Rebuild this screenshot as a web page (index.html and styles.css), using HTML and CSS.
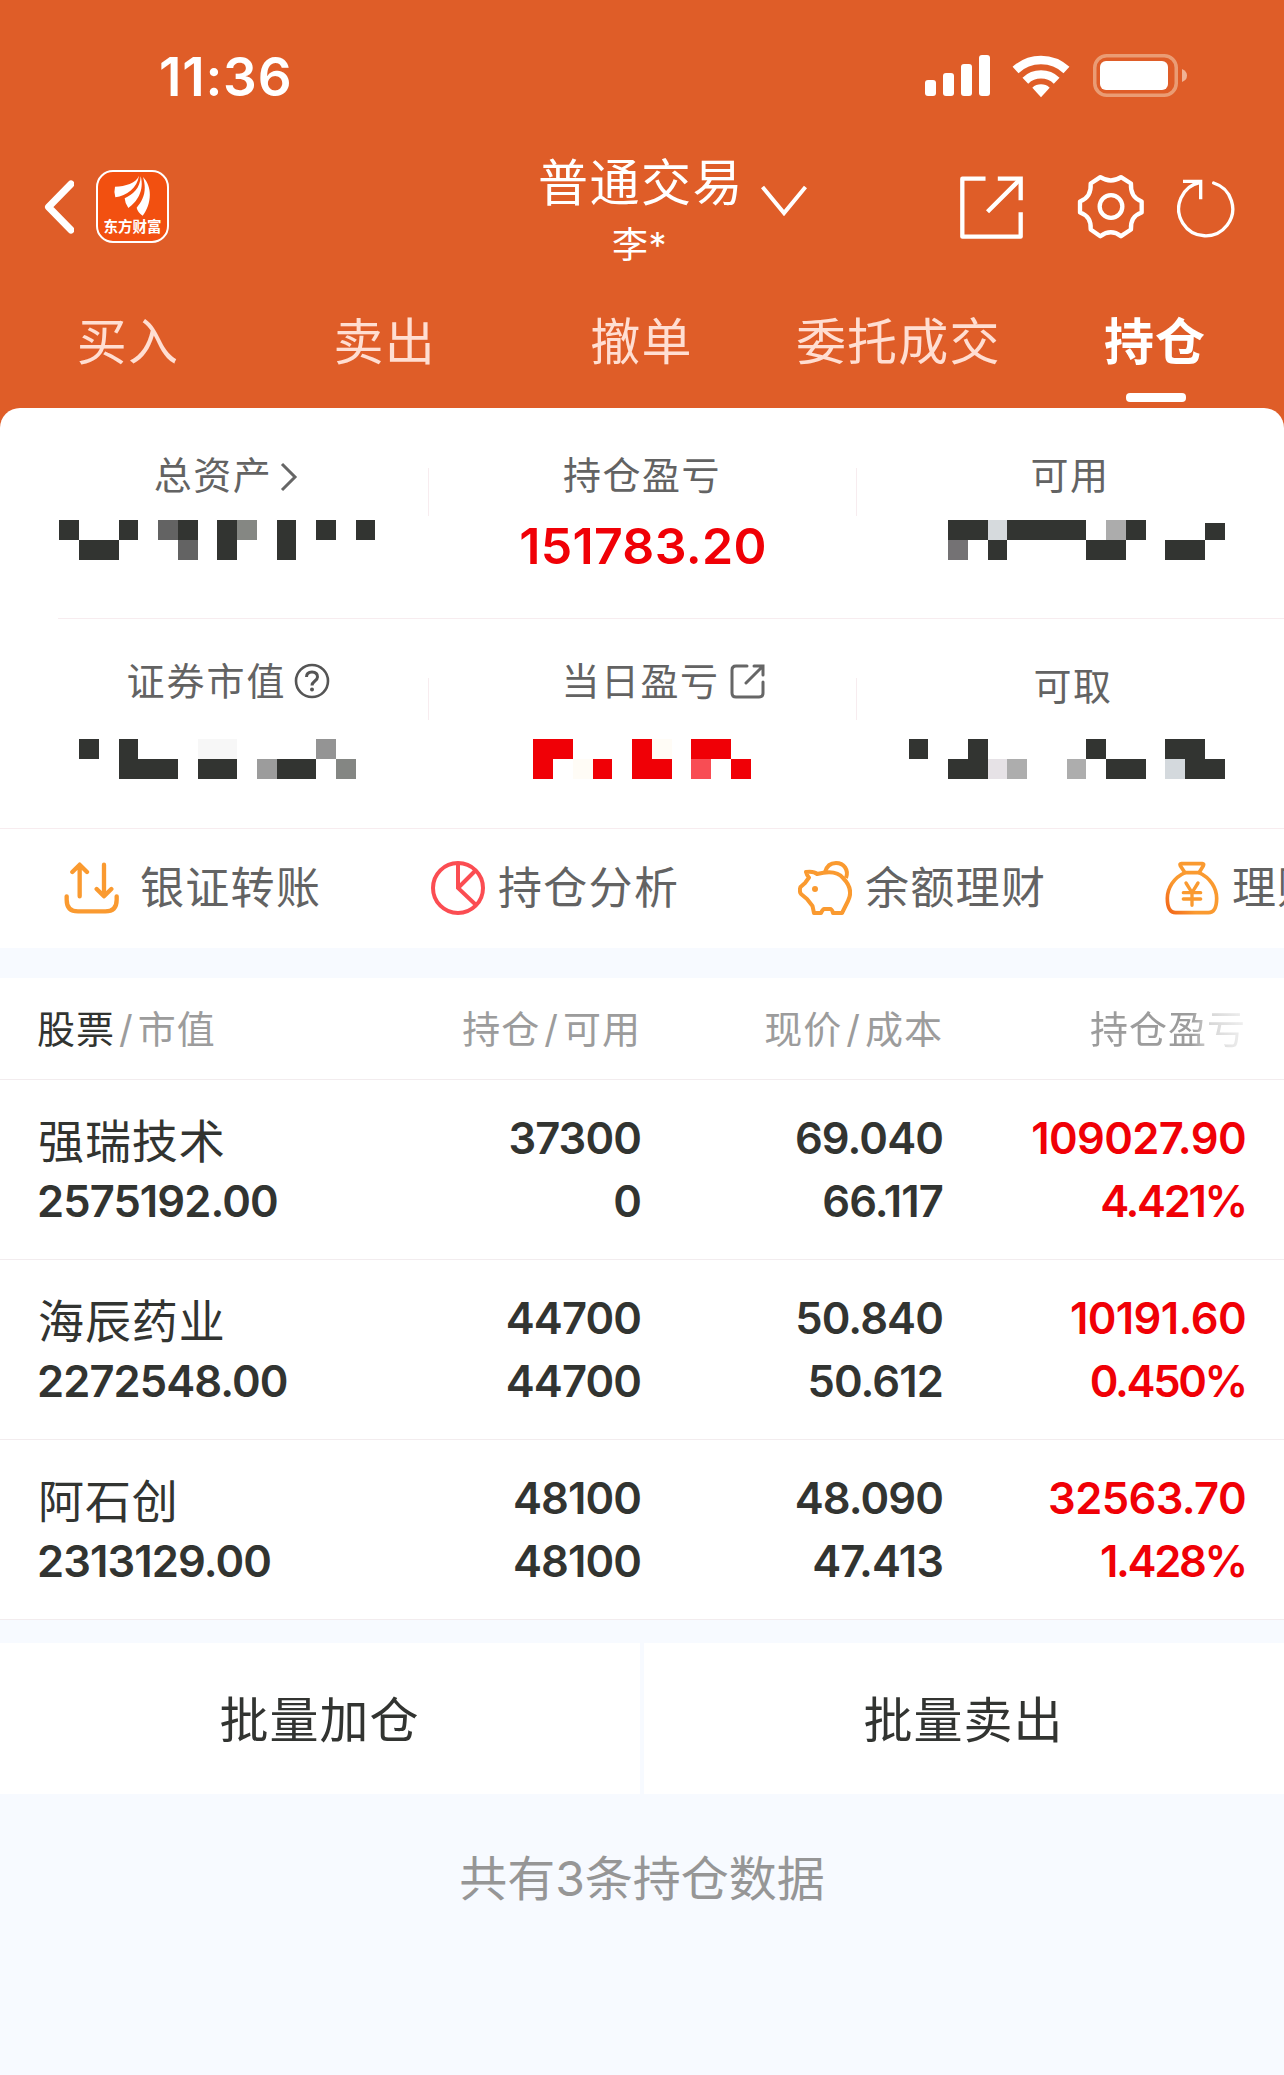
FILE: index.html
```html
<!DOCTYPE html>
<html lang="zh-CN">
<head>
    <meta charset="UTF-8">
    <meta name="viewport" content="width=device-width, initial-scale=1.0">
    <title>普通交易 - 持仓</title>
    <link rel="stylesheet" href="styles.css">
</head>
<body>
    <header class="header">
        <div class="status-bar">
            <span class="time">11:36</span>
            <div class="status-icons">
                <svg class="signal" width="65" height="41" viewBox="0 0 65 41" fill="#fff">
                    <rect x="0" y="25" width="11" height="16" rx="3"/>
                    <rect x="18" y="18" width="11" height="23" rx="3"/>
                    <rect x="36" y="9" width="11" height="32" rx="3"/>
                    <rect x="54" y="0" width="11" height="41" rx="3"/>
                </svg>
                <svg class="wifi" width="60" height="44" viewBox="0 0 180 132" fill="none" stroke="#fff">
                    <path d="M13.6 48A112 112 0 0 1 166.4 48" stroke-width="26"/>
                    <path d="M43 80A68.5 68.5 0 0 1 137 80" stroke-width="25"/>
                    <path d="M90 130L64 101A39 39 0 0 1 116 101Z" fill="#fff" stroke="none"/>
                </svg>
                <svg class="battery" width="95" height="43" viewBox="0 0 95 43">
                    <rect x="1.75" y="1.75" width="81.5" height="39.5" rx="12" fill="none" stroke="#ea9c74" stroke-width="3.5"/>
                    <rect x="7" y="7" width="68" height="29" rx="6" fill="#fff"/>
                    <path d="M89 15Q94 17 94 21.500T89 28Z" fill="#f0b294"/>
                </svg>
            </div>
        </div>

        <div class="nav">
            <div class="nav-left">
                <svg width="30" height="54" viewBox="0 0 30 54" fill="none" stroke="#fff" stroke-width="7" stroke-linecap="round" stroke-linejoin="round">
                    <path d="M27 4L4.500 27L27 50"/>
                </svg>
                <div class="logo">
                    <svg width="40" height="42" viewBox="44 14 120 126" fill="#fff">
                        <path d="M122 16C112 40 82 47 50 49Q46 65 51 81C85 76 117 52 122 16Z"/>
                        <path d="M127 18C126 55 102 73 79 84Q80 100 90 113C116 96 139 60 127 18Z"/>
                        <path d="M134 20C147 63 134 90 115 112Q118 126 133 136C154 110 168 55 134 20Z"/>
                    </svg>
                    <span>东方财富</span>
                </div>
            </div>
            <div class="nav-title">
                <h1>普通交易</h1>
                <p>李*</p>
            </div>
            <svg class="nav-arrow" width="46" height="32" viewBox="0 0 46 32" fill="none" stroke="#fff" stroke-width="4">
                <path d="M1.500 2L23 28L44.500 2"/>
            </svg>
            <div class="nav-icons">
                <svg width="63" height="63" viewBox="0 0 190 190" fill="none" stroke="#fff" stroke-width="13" stroke-linejoin="round">
                    <path d="M77 8H7V183H183V109M83 108L181 10"/>
                    <path d="M114 8H183V73" stroke-linejoin="miter"/>
                </svg>
                <svg class="gear" width="70" height="67" viewBox="0 0 210 200" fill="none" stroke="#fff" stroke-width="13" stroke-linejoin="round">
                    <path d="M44 31L73 12Q105 32 135 12L165 31Q162 72 197 85V118Q162 130 165 169L135 189Q105 166 73 189L44 169Q47 130 12 118V85Q47 72 44 31Z"/>
                    <circle cx="105" cy="100" r="34"/>
                </svg>
                <svg class="refresh" width="60" height="60" viewBox="0 0 180 180" fill="none" stroke="#fff" stroke-width="10">
                    <path d="M110 15A81 81 0 1 1 70 13" stroke-linecap="round"/>
                    <path d="M18 10H71V64"/>
                </svg>
            </div>
        </div>

        <nav class="tabs">
            <a class="tab">买入</a>
            <a class="tab">卖出</a>
            <a class="tab">撤单</a>
            <a class="tab">委托成交</a>
            <a class="tab active">持仓</a>
        </nav>
    </header>

    <div class="card-wrap">
        <section class="card">
            <div class="stats">
                <div class="stat">
                    <div class="label label-assets">总资产
                        <svg width="18" height="30" viewBox="0 0 18 30" fill="none" stroke="#666" stroke-width="3"><path d="M2 2L15 15L2 28"/></svg>
                    </div>
                    <svg class="mosaic" width="428" height="40" viewBox="0 0 428 40" fill="#323431" shape-rendering="crispEdges">
                        <path d="M59 0H79V20H59ZM119 0H138V20H119ZM79 20H119V40H79ZM178 0H198V20H178ZM217 0H237V40H217ZM277 0H296V40H277ZM316 0H336V20H316ZM356 0H375V20H356Z"/>
                        <path fill="#636363" d="M158 0H178V20H158ZM178 20H198V40H178Z"/>
                        <path fill="#858783" d="M237 0H257V20H237Z"/>
                    </svg>
                </div>
                <div class="stat">
                    <div class="label">持仓盈亏</div>
                    <div class="total">151783.20</div>
                </div>
                <div class="stat">
                    <div class="label">可用</div>
                    <svg class="mosaic" width="428" height="40" viewBox="0 0 428 40" fill="#323431" shape-rendering="crispEdges">
                        <path d="M92 0H132V20H92ZM151 0H230V20H151ZM270 0H290V20H270ZM349 3H369V20H349ZM132 20H151V40H132ZM230 20H270V40H230ZM309 20H349V40H309Z"/>
                        <path fill="#d6dadd" d="M132 0H151V20H132Z"/>
                        <path fill="#acacac" d="M250 0H270V20H250Z"/>
                        <path fill="#747274" d="M92 20H112V40H92Z"/>
                    </svg>
                </div>
            </div>
            <div class="stats stats-second">
                <div class="stat">
                    <div class="label label-market">证券市值
                        <svg width="36" height="36" viewBox="0 0 36 36" fill="none" stroke="#555" stroke-width="2.600">
                            <circle cx="18" cy="18" r="16"/>
                            <path d="M12.500 14Q12.500 9 18 9T23.500 14C23.500 18 18 18 18 22.500" stroke-width="3"/>
                            <circle cx="18" cy="26.500" r="2" fill="#555" stroke="none"/>
                        </svg>
                    </div>
                    <svg class="mosaic" width="428" height="40" viewBox="0 0 428 40" fill="#323431" shape-rendering="crispEdges">
                        <path d="M79 0H99V20H79ZM119 0H138V20H178V40H119ZM198 20H237V40H198ZM277 20H316V40H277Z"/>
                        <path fill="#f7f7f7" d="M198 0H237V20H198Z"/>
                        <path fill="#9c9c9c" d="M257 20H277V40H257Z"/>
                        <path fill="#949494" d="M316 0H336V20H316Z"/>
                        <path fill="#848683" d="M336 20H356V40H336Z"/>
                    </svg>
                </div>
                <div class="stat">
                    <div class="label label-today">当日盈亏
                        <svg width="35" height="35" viewBox="0 0 35 35" fill="none" stroke="#666" stroke-width="3" stroke-linecap="round">
                            <path d="M17 2H6Q2 2 2 6V29Q2 33 6 33H29Q33 33 33 29V18M24 2H33V11M16 19L32 3"/>
                        </svg>
                    </div>
                    <svg class="mosaic" width="428" height="40" viewBox="0 0 428 40" fill="#f00006" shape-rendering="crispEdges">
                        <path d="M105 0H145V20H125V40H105ZM165 20H184V40H165ZM204 0H224V20H244V40H204ZM263 0H303V20H263ZM303 20H323V40H303Z"/>
                        <path fill="#fffcf6" d="M145 20H165V40H145ZM224 0H244V20H224Z"/>
                        <path fill="#f84d54" d="M263 20H283V40H263Z"/>
                    </svg>
                </div>
                <div class="stat">
                    <div class="label label-draw">可取</div>
                    <svg class="mosaic" width="428" height="40" viewBox="0 0 428 40" fill="#323431" shape-rendering="crispEdges">
                        <path d="M53 0H72V20H53ZM112 0H132V40H92V20H112ZM230 0H250V20H230ZM250 20H290V40H250ZM309 0H349V20H369V40H329V20H309Z"/>
                        <path fill="#e6e2e6" d="M132 20H151V40H132Z"/>
                        <path fill="#adadad" d="M151 20H171V40H151ZM211 20H230V40H211Z"/>
                        <path fill="#d4d9dd" d="M309 20H329V40H309Z"/>
                    </svg>
                </div>
            </div>

            <div class="tools">
                <a class="tool tool-transfer">
                    <svg width="55" height="52" viewBox="0 0 165 156" fill="none" stroke="#fa9a30" stroke-width="13" stroke-linecap="round" stroke-linejoin="round">
                        <path d="M8 103V113Q8 148 42 148H124Q158 148 158 113V103"/>
                        <path d="M47 103V9M25 30L47 8L69 30M120 8V102M98 81L120 103L142 81"/>
                    </svg>
                    银证转账
                </a>
                <a class="tool">
                    <svg width="54" height="54" viewBox="0 0 54 54" fill="none" stroke="#fb4d52" stroke-width="4">
                        <circle cx="27" cy="27" r="25"/>
                        <path d="M27 2V27L45 44M27 27L44 10"/>
                    </svg>
                    持仓分析
                </a>
                <a class="tool">
                    <svg width="54" height="54" viewBox="0 0 54 54" fill="none" stroke="#fa9a30" stroke-width="4" stroke-linejoin="round">
                        <path d="M8 11Q16 10 19 13Q38 8 45 17Q56 28 50 40L44 52H35Q34 48 32 48H26Q25 48 23 52H16L14.500 45L9 38L3 33Q1 30 2.500 26L7 22L11 16.500Q9 15 8 11Z"/>
                        <path d="M27 11C29 4 34 2 38 2C46 2 51 9 48 17"/>
                        <circle cx="17" cy="28" r="3" fill="#fa9a30" stroke="none"/>
                    </svg>
                    余额理财
                </a>
                <a class="tool">
                    <svg width="54" height="54" viewBox="3 3 162 162" fill="none" stroke="url(#bag)" stroke-width="11" stroke-linecap="round" stroke-linejoin="round">
                        <defs>
                            <linearGradient id="bag" gradientUnits="userSpaceOnUse" x1="5" y1="150" x2="60" y2="110">
                                <stop offset="0" stop-color="#f26418"/>
                                <stop offset="1" stop-color="#fa9a30"/>
                            </linearGradient>
                        </defs>
                        <path d="M63 38L49 17Q46 11 52 11H115Q121 11 118 17L105 38Z"/>
                        <path d="M63 38C28 54 10 85 10 115C10 145 18 158 35 158H133C150 158 158 145 158 115C158 85 140 54 105 38"/>
                        <path d="M66 69L84 98L102 69M84 98V136M58 98H110M58 117H110" stroke="#fa9a30" stroke-width="10"/>
                    </svg>
                    理财
                </a>
            </div>
        </section>
    </div>

    <section class="holdings">
        <div class="row table-head">
            <div><b>股票</b><i>/</i>市值</div>
            <div>持仓<i>/</i>可用</div>
            <div>现价<i>/</i>成本</div>
            <div class="fade">持仓盈亏</div>
        </div>
        <div class="row">
            <div><p class="name">强瑞技术</p><p>2575192.00</p></div>
            <div><p>37300</p><p>0</p></div>
            <div><p>69.040</p><p>66.117</p></div>
            <div class="up"><p>109027.90</p><p class="rate">4.421%</p></div>
        </div>
        <div class="row">
            <div><p class="name">海辰药业</p><p>2272548.00</p></div>
            <div><p>44700</p><p>44700</p></div>
            <div><p>50.840</p><p>50.612</p></div>
            <div class="up"><p>10191.60</p><p class="rate">0.450%</p></div>
        </div>
        <div class="row">
            <div><p class="name">阿石创</p><p>2313129.00</p></div>
            <div><p>48100</p><p>48100</p></div>
            <div><p>48.090</p><p>47.413</p></div>
            <div class="up"><p>32563.70</p><p class="rate">1.428%</p></div>
        </div>
    </section>

    <div class="actions">
        <button type="button">批量加仓</button>
        <button type="button">批量卖出</button>
    </div>
    <p class="summary">共有3条持仓数据</p>
</body>
</html>
```
FILE: styles.css
```css
* {
    margin: 0;
    padding: 0;
    box-sizing: border-box;
}

body {
    width: 1284px;
    min-height: 2075px;
    font-family: Inter, "Noto Sans CJK SC", sans-serif;
    background-color: #f7faff;
    color: #323431;
    overflow-x: hidden;
}

svg {
    display: block;
    flex-shrink: 0;
}

/* header */
.header {
    background-color: #df5d28;
    color: #fff;
    height: 408px;
}

.status-bar {
    display: flex;
    justify-content: space-between;
    align-items: center;
    height: 154px;
    padding: 0 96px 0 159px;
}

.time {
    font-size: 53px;
    font-weight: 600;
    letter-spacing: 0.800px;
    line-height: 60px;
}

.status-icons {
    display: flex;
    align-items: center;
    padding-bottom: 3px;
}

.wifi {
    margin: 0 22px 0 21px;
}

.nav {
    display: flex;
    height: 136px;
    padding-right: 47px;
}

.nav-left {
    display: flex;
    align-items: center;
    gap: 22px;
    width: 538px;
    height: 105px;
    padding-left: 44px;
}

.logo {
    width: 73px;
    height: 73px;
    border: 2px solid #fff;
    border-radius: 17px;
    background-color: #f25010;
    display: flex;
    flex-direction: column;
    align-items: center;
    padding-top: 3px;
}

.logo span {
    font-size: 14.500px;
    font-weight: 700;
    line-height: 20px;
}

.nav-title {
    width: 203px;
    text-align: center;
}

.nav-title h1 {
    font-size: 50px;
    font-weight: 400;
    letter-spacing: 1.500px;
    line-height: 58px;
    white-space: nowrap;
}

.nav-title p {
    font-size: 36px;
    letter-spacing: 0.500px;
    line-height: 67px;
}

.nav-arrow {
    margin: 31px 0 0 20px;
}

.nav-icons {
    display: flex;
    align-items: center;
    height: 107px;
    margin-left: auto;
}

.gear {
    margin: 0 31px 2px 53px;
}

.tabs {
    display: grid;
    grid-template-columns: repeat(5, 1fr);
    padding-top: 22px;
}

.tab {
    display: flex;
    flex-direction: column;
    align-items: center;
    font-size: 50px;
    letter-spacing: 1.200px;
    line-height: 60px;
    padding-right: 1px;
    color: #ffded2;
}

.tab.active {
    color: #fff;
    font-weight: 600;
}

.tab.active::after {
    content: "";
    width: 60px;
    height: 9px;
    margin: 21px 0 0 2px;
    border-radius: 4px;
    background-color: #fff;
}

/* account summary */
.card-wrap {
    background-color: #df5d28;
}

.card {
    height: 540px;
    background-color: #fff;
    border-radius: 20px 20px 0 0;
    overflow: hidden;
}

.stats {
    display: grid;
    grid-template-columns: repeat(3, 428px);
    height: 210px;
    padding-top: 42px;
    background: linear-gradient(#f7ecef, #f7ecef) 428px 60px / 1px 48px no-repeat,
        linear-gradient(#f7ecef, #f7ecef) 856px 60px / 1px 48px no-repeat;
}

.stats-second {
    padding-top: 38px;
    background: linear-gradient(#f7ecef, #f7ecef) 58px 0 / 1226px 1px no-repeat,
        linear-gradient(#f7ecef, #f7ecef) 428px 60px / 1px 42px no-repeat,
        linear-gradient(#f7ecef, #f7ecef) 856px 60px / 1px 42px no-repeat;
}

.label {
    display: flex;
    justify-content: center;
    align-items: center;
    height: 50px;
    font-size: 38px;
    letter-spacing: 1.500px;
    line-height: 50px;
    color: #636363;
}

.label-assets {
    gap: 8px;
    padding-left: 24px;
}

.label-assets svg {
    margin-top: 4px;
}

.label-market {
    gap: 7px;
    padding-left: 28px;
    letter-spacing: 2px;
}

.label-today {
    gap: 10px;
    padding-left: 42px;
}

.label-draw {
    padding: 10px 0 0 6px;
}

.mosaic {
    margin-top: 20px;
}

.stats-second .mosaic {
    margin-top: 33px;
}

.total {
    font-size: 50px;
    font-weight: 600;
    letter-spacing: 0.300px;
    line-height: 60px;
    margin-top: 16px;
    padding-left: 2px;
    text-align: center;
    color: #f00006;
}

.tools {
    display: flex;
    height: 120px;
    padding-left: 64px;
    border-top: 1px solid #f7ecef;
    overflow: hidden;
}

.tool {
    display: flex;
    align-items: center;
    flex: 0 0 367px;
    gap: 13px;
    padding-bottom: 1px;
    font-size: 44px;
    letter-spacing: 1.300px;
    line-height: 60px;
    color: #636363;
    white-space: nowrap;
}

.tool-transfer {
    gap: 21px;
}

/* holdings */
.holdings {
    margin-top: 30px;
    background-color: #fff;
}

.row {
    display: grid;
    grid-template-columns: 300px 304px 302px 303px;
    height: 180px;
    padding: 26px 38px 0 37px;
    border-bottom: 1px solid #f2ecee;
    font-size: 43.500px;
    font-weight: 600;
    letter-spacing: -0.900px;
    line-height: 64px;
    text-align: right;
}

.row > div:first-child {
    text-align: left;
}

.row p {
    height: 63px;
}

.row .name {
    font-size: 46px;
    font-weight: 400;
    letter-spacing: 0.900px;
    margin: 3px 0 -3px;
    padding-left: 1px;
}

.row .up {
    color: #f00006;
    letter-spacing: -0.600px;
}

.row .rate {
    letter-spacing: -2.300px;
}

.table-head {
    height: 102px;
    padding-top: 20px;
    font-size: 38px;
    font-weight: 400;
    letter-spacing: 1px;
    line-height: 63px;
    color: #9c9c9c;
}

.table-head b {
    font-weight: 400;
    color: #323431;
}

.table-head i {
    font-style: normal;
    padding: 0 4px;
}

.fade {
    -webkit-mask-image: linear-gradient(to right, #000 248px, rgba(0, 0, 0, 0.400) 268px, rgba(0, 0, 0, 0.150) 100%);
    mask-image: linear-gradient(to right, #000 248px, rgba(0, 0, 0, 0.400) 268px, rgba(0, 0, 0, 0.150) 100%);
}

/* bottom */
.actions {
    display: flex;
    gap: 4px;
    margin-top: 23px;
}

.actions button {
    flex: 1;
    height: 151px;
    padding: 5px 1px 0 0;
    border: none;
    background-color: #fff;
    color: #323431;
    font-family: inherit;
    font-size: 49px;
    letter-spacing: 1px;
    line-height: 60px;
}

.summary {
    margin-top: 55px;
    font-size: 48px;
    line-height: 60px;
    text-align: center;
    color: #969696;
}
```
